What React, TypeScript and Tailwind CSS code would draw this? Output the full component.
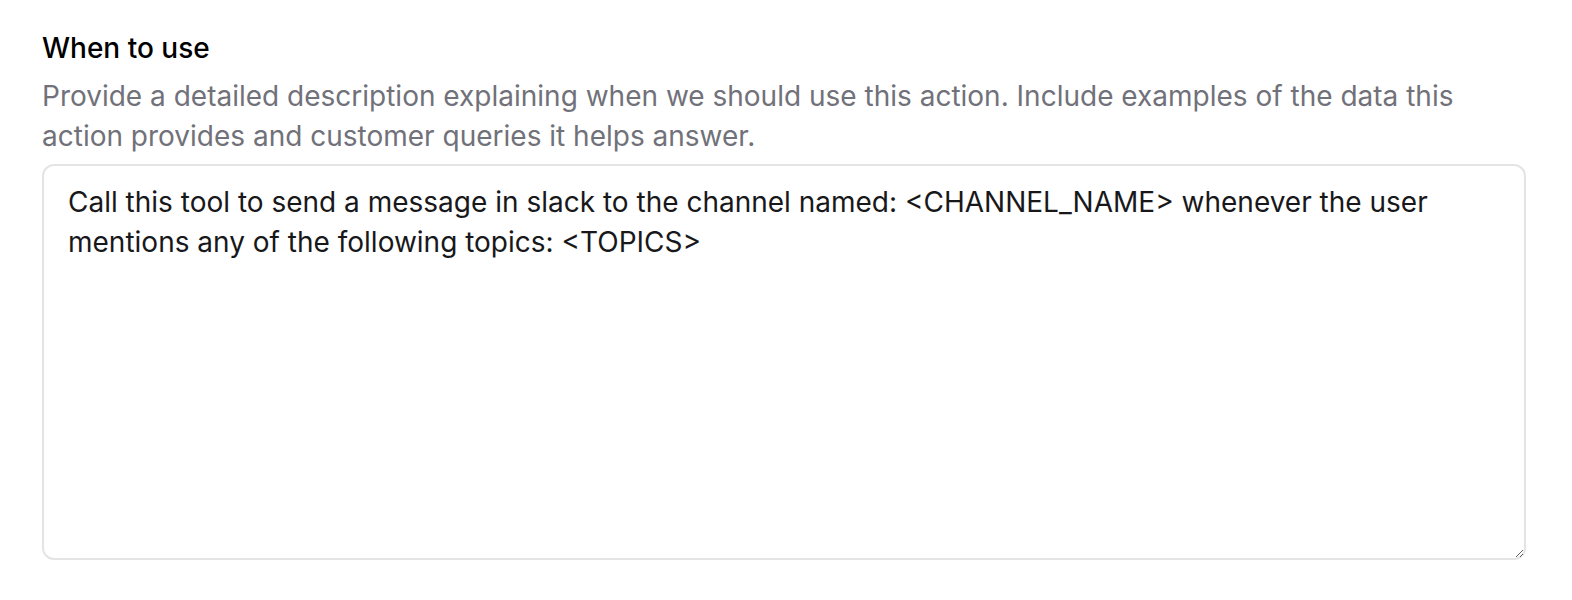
import React from 'react';

export default function App() {
  return (
    <div className="min-h-[600px] bg-white pl-[42px] pr-[46px] pt-[28px]" style={{ fontFamily: 'Inter, "Noto Sans", sans-serif' }}>
      <div className="flex flex-col">
        <label className="text-[28px] leading-[40px] font-medium text-black">When to use</label>
        <p className="text-[28px] leading-[39.5px] text-[#71717a] mt-[9px]">
          Provide a detailed description explaining when we should use this action. Include examples of the data this
          action provides and customer queries it helps answer.
        </p>
        <textarea
          className="mt-[8px] h-[396px] w-full rounded-[12px] border-2 border-[#e4e4e7] px-[24px] py-[16px] text-[28px] leading-[40px] text-[#18181b] outline-none"
          style={{ fontFamily: 'Inter, "Noto Sans", sans-serif' }}
          defaultValue="Call this tool to send a message in slack to the channel named: <CHANNEL_NAME> whenever the user mentions any of the following topics: <TOPICS>"
        />
      </div>
    </div>
  );
}
